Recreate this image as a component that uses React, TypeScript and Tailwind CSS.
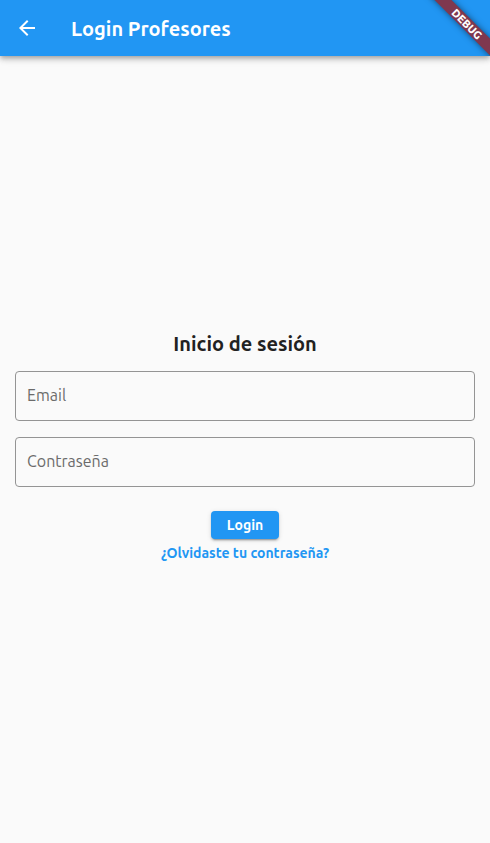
import type { InputHTMLAttributes } from "react";

function ArrowBack() {
  return (
    <svg viewBox="0 0 24 24" className="h-6 w-6 fill-current" aria-hidden="true">
      <path d="M20 11H7.83l5.59-5.59L12 4l-8 8 8 8 1.41-1.41L7.83 13H20v-2z" />
    </svg>
  );
}

function Field({ label, ...props }: { label: string } & InputHTMLAttributes<HTMLInputElement>) {
  return (
    <input
      aria-label={label}
      placeholder={label}
      className="block h-[50px] w-full rounded border border-[#949494] bg-transparent px-[11px] pb-0.5 text-base text-[#212121] outline-none placeholder:text-[#6b6b6b] focus:border-[#2196f3]"
      {...props}
    />
  );
}

function DebugBanner() {
  return (
    <div className="pointer-events-none absolute top-0 right-0 z-20 h-14 w-20 overflow-hidden">
      <div className="absolute top-[18px] -right-[25px] flex h-3 w-24 rotate-45 items-center justify-center bg-[#7f384f] text-[11px] leading-3 font-black text-white shadow-[0_0_6px_rgba(0,0,0,0.5)]">
        DEBUG
      </div>
    </div>
  );
}

export default function App() {
  return (
    <div className="relative flex min-h-screen flex-col overflow-hidden bg-[#fafafa] font-['Ubuntu','Noto_Sans',sans-serif]">
      <header className="z-10 flex h-14 items-center bg-[#2196f3] text-white shadow-[0_2px_4px_-1px_rgba(0,0,0,0.2),0_4px_5px_rgba(0,0,0,0.14),0_1px_10px_rgba(0,0,0,0.12)]">
        <button type="button" aria-label="Volver" className="flex h-14 w-14 items-center justify-center pr-0.5">
          <ArrowBack />
        </button>
        <h1 className="pt-0.5 pl-[15px] text-xl font-semibold">Login Profesores</h1>
      </header>
      <DebugBanner />
      <main className="flex flex-1 flex-col justify-center px-[15px]">
        <form className="flex flex-col items-center" onSubmit={(e) => e.preventDefault()}>
          <h2 className="mb-4 text-xl leading-[23px] font-bold text-[#212121]">Inicio de sesión</h2>
          <div className="mb-6 flex w-full flex-col gap-4">
            <Field label="Email" type="email" />
            <Field label="Contraseña" type="password" />
          </div>
          <button
            type="submit"
            className="h-7 rounded bg-[#2196f3] px-4 text-sm font-semibold text-white shadow-[0_3px_1px_-2px_rgba(0,0,0,0.2),0_2px_2px_rgba(0,0,0,0.14),0_1px_5px_rgba(0,0,0,0.12)]"
          >
            Login
          </button>
          <button type="button" className="h-7 text-sm font-semibold text-[#2196f3]">
            ¿Olvidaste tu contraseña?
          </button>
        </form>
      </main>
    </div>
  );
}
